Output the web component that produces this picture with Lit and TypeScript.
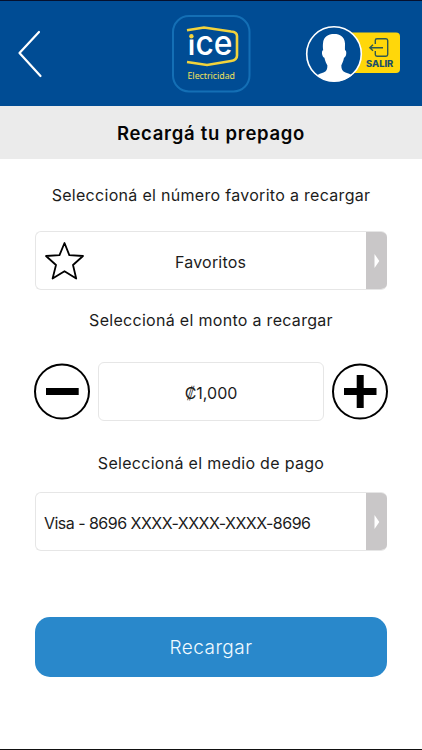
import { LitElement, html, css } from "lit";
import { customElement } from "lit/decorators.js";

@customElement("app-root")
export class AppRoot extends LitElement {
  static styles = css`
    :host { display: block; width: 422px; height: 750px; background: #fff; color: #1c1c1c; font-family: Inter, "Open Sans", sans-serif; }
    * { box-sizing: border-box; }
    .screen { height: 750px; display: flex; flex-direction: column; border-top: 1px solid #05102e; border-bottom: 1px solid #111; overflow: hidden; }
    svg { display: block; flex: none; }
    button { padding: 0; margin: 0; border: 0; background: none; font: inherit; color: inherit; }
    .header { height: 105px; flex: none; background: #004c94; }
    .title { height: 53px; flex: none; margin: 0; background: #ebebeb; display: flex; align-items: center; justify-content: center; font-size: 18.5px; font-weight: 600; letter-spacing: 0.72px; color: #050505; }
    .content { padding: 0 35px; display: flex; flex-direction: column; }
    .label { height: 24px; line-height: 24px; text-align: center; font-size: 16px; white-space: nowrap; }
    .l1 { margin-top: 24px; letter-spacing: 0.3px; }
    .l2 { margin-top: 18px; letter-spacing: 0.3px; }
    .l3 { margin-top: 30px; letter-spacing: 0.3px; }
    .field { height: 59px; width: 352px; display: flex; border: 1px solid #e6e6e6; border-right: 0; border-radius: 6px; overflow: hidden; font-size: 16px; align-items: center; }
    .f1 { margin-top: 24px; }
    .f2 { margin-top: 17px; }
    .value { flex: 1; text-align: left; padding: 2px 0 0 8px; white-space: nowrap; }
    .card { letter-spacing: -0.53px; }
    .fav { padding: 2px 0 0 91px; letter-spacing: 0.2px; }
    .star { margin-left: 8px; }
    .arrow { width: 21px; height: 59px; background: #c9c7c8; display: flex; align-items: center; justify-content: center; }
    .row { display: flex; align-items: center; justify-content: space-between; width: 354px; margin: 30px 0 0 -1px; }
    .amount { width: 226px; height: 59px; border: 1px solid #e6e6e6; border-radius: 6px; display: flex; align-items: center; justify-content: center; font-size: 16px; padding-top: 2px; }
    .submit { margin-top: 66px; height: 60px; width: 352px; border-radius: 15px; background: #2988cb; color: #f0faff; font-size: 19px; font-weight: 300; letter-spacing: 0.45px; text-align: center; }
  `;

  private arrow() {
    return html`<span class="arrow"><svg width="6" height="14" viewBox="0 0 6 14"><path d="M.5 0 5.3 7 .5 14Z" fill="#fff"/></svg></span>`;
  }

  private header() {
    return html`<svg class="header" width="422" height="105" viewBox="0 1 422 105">
      <path d="M39 32 19.5 53 40.5 76" fill="none" stroke="#fff" stroke-width="2.2" stroke-linecap="round" stroke-linejoin="round"/>
      <rect x="173" y="16" width="76.5" height="75.5" rx="16" fill="#004c94" stroke="#146fb5" stroke-width="2"/>
      <text x="187.5" y="55" font-family="Inter" font-size="34" font-weight="500" fill="#fff" textLength="45" lengthAdjust="spacingAndGlyphs">ice</text>
      <rect x="187" y="28" width="8" height="11.5" fill="#004c94"/>
      <path d="M187 30.3 204 27.5 231 31.5Q237 32 237 36V55.5Q237 60 231 61L207 65 187 62" fill="none" stroke="#f2d33c" stroke-width="2.6"/>
      <circle cx="191.4" cy="36.3" r="2.2" fill="#f2d33c"/>
      <text x="187.5" y="78.6" font-family="Noto Sans" font-size="9.4" fill="#f0e15a" textLength="47.5" lengthAdjust="spacingAndGlyphs">Electricidad</text>
      <rect x="340" y="32.5" width="60" height="40.5" rx="4" fill="#ffd70a"/>
      <circle cx="334" cy="54" r="27.3" fill="#004c94" stroke="#fff" stroke-width="1.6"/>
      <path d="M334.3 34C340 34 344.5 36.5 345 43.5 345 46 344.9 48.5 345 50.3 347 50.2 346.7 57.3 344 57.7 343.4 61.5 342 63.5 341.3 65.5 341.3 69 342.5 71.5 345.5 72.4Q349.5 73.7 352 75.2 343.5 81.8 334 81.5 324.5 81.5 317 75.2 319.5 73.6 323.5 72.4C326.5 71.5 327.4 69 327.4 65.5 326.5 63.5 325 61 324.4 57.7 321.7 57.1 321.2 50.2 323.2 50.3 322.8 48 322.8 45 323 43.5 323.5 36.5 328 34 334.3 34Z" fill="#fff"/>
      <path d="M375.3 44V40.2Q375.3 38.7 377 38.7H386Q387.7 38.7 387.7 40.5V54.6Q387.7 56.2 386 56.2H377Q375.3 56.2 375.3 54.6V51M383 47.7H370M373 44.7 369.8 47.7 373 50.7" fill="none" stroke="#31594f" stroke-width="1.4"/>
      <text x="366" y="66.6" font-family="Inter" font-size="8.8" font-weight="800" fill="#1d4f68" textLength="27.3" lengthAdjust="spacingAndGlyphs">SALIR</text>
    </svg>`;
  }

  render() {
    return html`<div class="screen">
      ${this.header()}
      <h1 class="title">Recargá tu prepago</h1>
      <div class="content">
        <div class="label l1">Seleccioná el número favorito a recargar</div>
        <button class="field f1">
          <svg class="star" width="40" height="40" viewBox="0 0 40 40"><path d="M20.5 2 25.3 14.2 39 15 29 24 32.2 37.5 20.5 30.2 8.6 37.5 12 24 2 15 15.5 14.2Z" fill="none" stroke="#000" stroke-width="1.8" stroke-linejoin="round"/></svg>
          <span class="value fav">Favoritos</span>${this.arrow()}
        </button>
        <div class="label l2">Seleccioná el monto a recargar</div>
        <div class="row">
          <button><svg width="56" height="57" viewBox="0 0 56 57"><circle cx="28" cy="28.5" r="27" fill="none" stroke="#000" stroke-width="2"/><path d="M12 28.5H44.7" stroke="#000" stroke-width="7"/></svg></button>
          <div class="amount">₡1,000</div>
          <button><svg width="56" height="57" viewBox="0 0 56 57"><circle cx="28" cy="28.5" r="27" fill="none" stroke="#000" stroke-width="2"/><path d="M12 28.5H44.5M28.2 12V45" stroke="#000" stroke-width="7"/></svg></button>
        </div>
        <div class="label l3">Seleccioná el medio de pago</div>
        <button class="field f2"><span class="value card">Visa - 8696 XXXX-XXXX-XXXX-8696</span>${this.arrow()}</button>
        <button class="submit">Recargar</button>
      </div>
    </div>`;
  }
}
